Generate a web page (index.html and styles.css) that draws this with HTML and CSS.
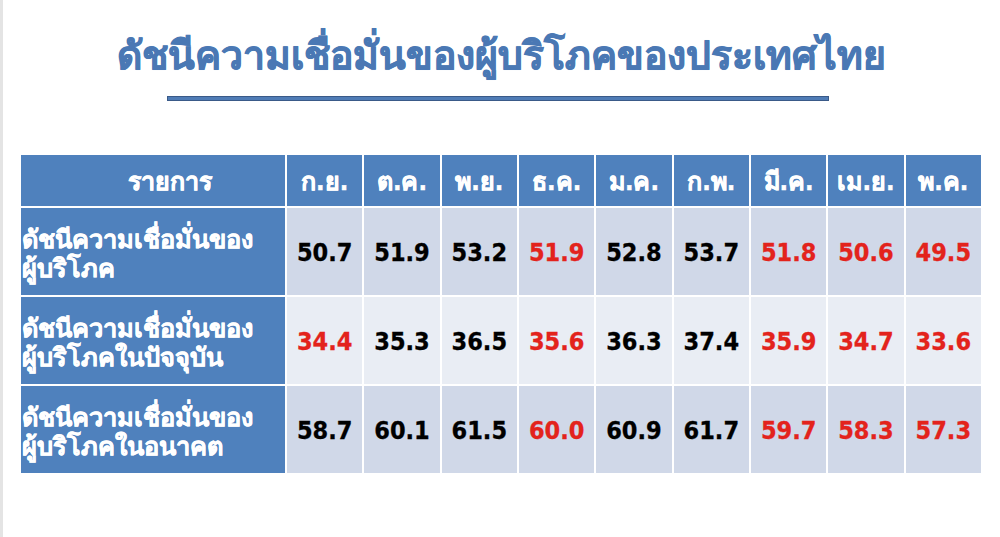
FILE: index.html
```html
<!DOCTYPE html>
<html lang="th">
<head>
<meta charset="utf-8">
<title>ดัชนีความเชื่อมั่นของผู้บริโภคของประเทศไทย</title>
<link rel="stylesheet" href="styles.css">
</head>
<body>
<div class="slide">
  <h1 class="title">ดัชนีความเชื่อมั่นของผู้บริโภคของประเทศไทย</h1>
  <div class="rule"></div>
  <table class="grid">
    <colgroup>
      <col class="col-label">
      <col><col><col><col><col><col><col><col><col>
    </colgroup>
    <thead>
      <tr>
        <th class="label-head">รายการ</th>
        <th>ก.ย.</th><th>ต.ค.</th><th>พ.ย.</th><th>ธ.ค.</th><th>ม.ค.</th><th>ก.พ.</th><th>มี.ค.</th><th>เม.ย.</th><th>พ.ค.</th>
      </tr>
    </thead>
    <tbody>
      <tr class="row-dark">
        <th class="label">ดัชนีความเชื่อมั่นของ<br>ผู้บริโภค</th>
        <td>50.7</td><td>51.9</td><td>53.2</td><td class="down">51.9</td><td>52.8</td><td>53.7</td><td class="down">51.8</td><td class="down">50.6</td><td class="down">49.5</td>
      </tr>
      <tr class="row-light">
        <th class="label">ดัชนีความเชื่อมั่นของ<br>ผู้บริโภคในปัจจุบัน</th>
        <td class="down">34.4</td><td>35.3</td><td>36.5</td><td class="down">35.6</td><td>36.3</td><td>37.4</td><td class="down">35.9</td><td class="down">34.7</td><td class="down">33.6</td>
      </tr>
      <tr class="row-dark">
        <th class="label">ดัชนีความเชื่อมั่นของ<br>ผู้บริโภคในอนาคต</th>
        <td>58.7</td><td>60.1</td><td>61.5</td><td class="down">60.0</td><td>60.9</td><td>61.7</td><td class="down">59.7</td><td class="down">58.3</td><td class="down">57.3</td>
      </tr>
    </tbody>
  </table>
</div>
</body>
</html>
```

FILE: styles.css
```css
html, body {
  margin: 0;
  padding: 0;
  background: #ffffff;
}

.slide {
  box-sizing: border-box;
  width: 1000px;
  height: 537px;
  border-left: 3px solid #e4e4e4;
  padding-top: 30px;
  font-family: "DejaVu Sans Condensed", "DejaVu Sans", sans-serif;
}

.title {
  margin: 0;
  text-align: center;
  font-size: 39px;
  line-height: 52px;
  font-weight: bold;
  color: #4a78b4;
  -webkit-text-stroke: 0.6px #4a78b4;
  text-shadow: 0 0 1px #c9d6e8;
}

.rule {
  width: 662px;
  height: 5px;
  margin: 14px 0 0 164px;
  box-sizing: border-box;
  background: #4f7cb6;
  border: 1px solid #3a5a88;
}

.grid {
  margin: 52px 0 0 16px;
  border-collapse: collapse;
  width: 964px;
  table-layout: fixed;
}

.grid .col-label {
  width: 266px;
}

.grid th,
.grid td {
  border: 2px solid #ffffff;
  padding: 0;
  font-weight: bold;
}

.grid thead th {
  background: #4f81bd;
  color: #ffffff;
  height: 51px;
  font-size: 25px;
  text-align: center;
  -webkit-text-stroke: 0.4px #ffffff;
}

.grid thead th.label-head {
  padding-left: 34px;
}

.grid tbody th.label {
  background: #4f81bd;
  color: #ffffff;
  text-align: left;
  font-size: 25.3px;
  line-height: 29px;
  padding: 4px 0 0 1px;
  height: 83px;
  -webkit-text-stroke: 0.4px #ffffff;
}

.grid td {
  text-align: center;
  font-size: 25px;
  color: #000000;
  padding-top: 2px;
  -webkit-text-stroke: 0.3px currentColor;
}

.grid .row-dark td {
  background: #d0d8e8;
}

.grid .row-light td {
  background: #e9edf4;
}

.grid td.down {
  color: #e3231c;
}
```
